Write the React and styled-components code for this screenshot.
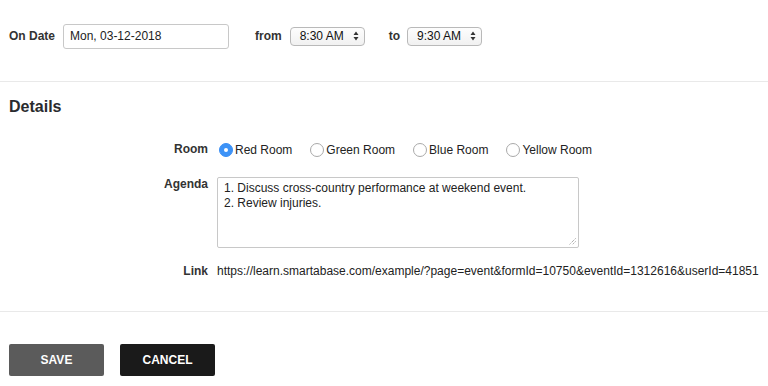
import React from "react";
import styled, { createGlobalStyle } from "styled-components";

const Global = createGlobalStyle`
  html, body { margin: 0; padding: 0; background: #fff; }
  body { font-family: "Liberation Sans", Arial, sans-serif; color: #222; }
  * { box-sizing: border-box; }
`;

const Page = styled.div`
  width: 768px;
  height: 386px;
  overflow: hidden;
`;

const TopSection = styled.div`
  padding: 23px 9px 32px;
  border-bottom: 1px solid #e9e9e9;
`;

const Row = styled.div`
  display: flex;
  align-items: center;
  height: 26px;
`;

const InlineLabel = styled.span`
  font-size: 12px;
  font-weight: bold;
  color: #333;
  margin-left: ${(p) => p.$ml || 0}px;
  margin-right: ${(p) => p.$mr || 0}px;
`;

const DateInput = styled.div`
  width: 166px;
  height: 25px;
  border: 1px solid #c8c8c8;
  border-radius: 3px;
  padding: 0 6px;
  display: flex;
  align-items: center;
  font-size: 12px;
  color: #222;
`;

const Select = styled.div`
  width: 75px;
  height: 19px;
  border: 1px solid #b9b9b9;
  border-radius: 4px;
  background: linear-gradient(#fdfdfd, #f1f1f1);
  display: flex;
  align-items: center;
  justify-content: space-between;
  padding: 0 5px 0 9px;
  font-size: 12px;
  color: #111;
`;

const Arrows = styled.svg`
  width: 6px;
  height: 10px;
`;

const DetailsSection = styled.div`
  padding: 15px 9px 32px;
  border-bottom: 1px solid #e9e9e9;
`;

const Heading = styled.h2`
  margin: 0 0 23px;
  font-size: 16px;
  line-height: 20px;
  font-weight: bold;
  color: #2a2b2e;
`;

const FormGrid = styled.div`
  display: grid;
  grid-template-columns: 199px 1fr;
  column-gap: 9px;
  row-gap: ${(p) => p.$gap}px;
  margin-top: ${(p) => p.$mt || 0}px;
`;

const FieldLabel = styled.div`
  font-size: 12px;
  font-weight: bold;
  color: #333;
  text-align: right;
  padding-top: ${(p) => p.$pt || 0}px;
  line-height: ${(p) => p.$lh || 16}px;
`;

const RadioGroup = styled.div`
  display: flex;
  align-items: center;
  height: 20px;
  gap: 18px;
  padding-left: 2px;
`;

const RadioItem = styled.label`
  display: flex;
  align-items: center;
  gap: 2px;
  font-size: 12px;
  color: #222;
`;

const RadioCircle = styled.span`
  width: 14px;
  height: 14px;
  border-radius: 50%;
  border: 1px solid ${(p) => (p.$on ? "#3b8ff5" : "#a9a9a9")};
  background: ${(p) => (p.$on ? "#3d93f7" : "#fff")};
  display: flex;
  align-items: center;
  justify-content: center;
  &::after {
    content: "";
    width: 4px;
    height: 4px;
    border-radius: 50%;
    background: ${(p) => (p.$on ? "#fff" : "transparent")};
  }
`;

const TextArea = styled.div`
  position: relative;
  width: 362px;
  height: 71px;
  border: 1px solid #c8c8c8;
  border-radius: 2px;
  padding: 3px 6px;
  font-size: 12px;
  line-height: 15px;
  color: #222;
`;

const Grip = styled.svg`
  position: absolute;
  right: 2px;
  bottom: 2px;
  width: 7px;
  height: 7px;
`;

const LinkText = styled.div`
  font-size: 12px;
  line-height: 16px;
  color: #222;
  white-space: nowrap;
`;

const Actions = styled.div`
  display: flex;
  gap: 16px;
  padding: 32px 9px 0;
`;

const Button = styled.button`
  width: 95px;
  height: 32px;
  border: none;
  border-radius: 2px;
  background: ${(p) => p.$bg};
  color: #fff;
  font-family: "Liberation Sans", Arial, sans-serif;
  font-size: 12px;
  font-weight: bold;
  text-transform: uppercase;
`;

const SelectBox = ({ value }) => (
  <Select>
    <span>{value}</span>
    <Arrows viewBox="0 0 6 10">
      <path d="M3 0.5 L5.5 4 H0.5 Z M3 9.5 L5.5 6 H0.5 Z" fill="#333" />
    </Arrows>
  </Select>
);

const rooms = ["Red Room", "Green Room", "Blue Room", "Yellow Room"];

export default function App() {
  return (
    <Page>
      <Global />
      <TopSection>
        <Row>
          <InlineLabel $mr={8}>On Date</InlineLabel>
          <DateInput>Mon, 03-12-2018</DateInput>
          <InlineLabel $ml={26} $mr={8}>from</InlineLabel>
          <SelectBox value="8:30 AM" />
          <InlineLabel $ml={24} $mr={7}>to</InlineLabel>
          <SelectBox value="9:30 AM" />
        </Row>
      </TopSection>
      <DetailsSection>
        <Heading>Details</Heading>
        <FormGrid $gap={18}>
          <FieldLabel $lh={18}>Room</FieldLabel>
          <RadioGroup>
            {rooms.map((r, i) => (
              <RadioItem key={r}>
                <RadioCircle $on={i === 0} />
                {r}
              </RadioItem>
            ))}
          </RadioGroup>
        </FormGrid>
        <FormGrid $gap={15} $mt={17}>
          <FieldLabel $lh={14}>Agenda</FieldLabel>
          <TextArea>
            1. Discuss cross-country performance at weekend event.
            <br />
            2. Review injuries.
            <Grip viewBox="0 0 7 7">
              <path d="M6.5 0.5 L0.5 6.5 M6.5 3.5 L3.5 6.5" stroke="#888" strokeWidth="1" strokeDasharray="1 1" />
            </Grip>
          </TextArea>
          <FieldLabel>Link</FieldLabel>
          <LinkText>
            https://learn.smartabase.com/example/?page=event&amp;formId=10750&amp;eventId=1312616&amp;userId=41851
          </LinkText>
        </FormGrid>
      </DetailsSection>
      <Actions>
        <Button $bg="#5b5b5b">Save</Button>
        <Button $bg="#1a1a1a">Cancel</Button>
      </Actions>
    </Page>
  );
}
